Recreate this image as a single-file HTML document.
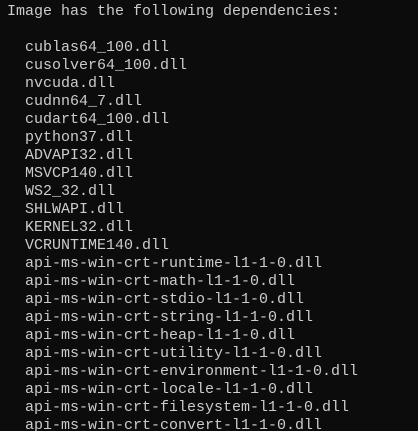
<!DOCTYPE html>
<html><head><style>
html,body{margin:0;padding:0;background:#0c0c0c;width:418px;height:431px;overflow:hidden}
pre{margin:0;padding:3px 0 0 7px;font-family:"Liberation Mono","Noto Sans CJK SC",monospace;font-size:15px;line-height:18px;color:#cccccc}
</style></head><body><pre>Image has the following dependencies:

  cublas64_100.dll
  cusolver64_100.dll
  nvcuda.dll
  cudnn64_7.dll
  cudart64_100.dll
  python37.dll
  ADVAPI32.dll
  MSVCP140.dll
  WS2_32.dll
  SHLWAPI.dll
  KERNEL32.dll
  VCRUNTIME140.dll
  api-ms-win-crt-runtime-l1-1-0.dll
  api-ms-win-crt-math-l1-1-0.dll
  api-ms-win-crt-stdio-l1-1-0.dll
  api-ms-win-crt-string-l1-1-0.dll
  api-ms-win-crt-heap-l1-1-0.dll
  api-ms-win-crt-utility-l1-1-0.dll
  api-ms-win-crt-environment-l1-1-0.dll
  api-ms-win-crt-locale-l1-1-0.dll
  api-ms-win-crt-filesystem-l1-1-0.dll
  api-ms-win-crt-convert-l1-1-0.dll</pre></body></html>
